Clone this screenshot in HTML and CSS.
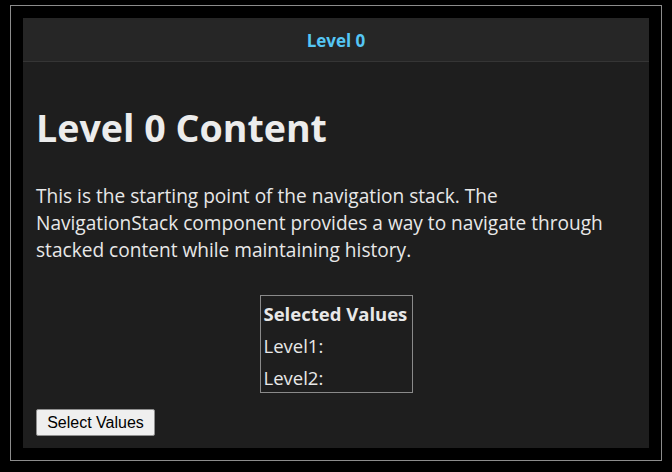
FILE: index.html
```html
<!DOCTYPE html>
<html lang="en">
<head>
<meta charset="utf-8">
<title>Navigation Stack</title>
<link rel="stylesheet" href="styles.css">
</head>
<body>
<div class="frame">
  <div class="nav-stack">
    <header class="nav-header">
      <span class="nav-title">Level 0</span>
    </header>
    <main class="nav-content">
      <h1 class="page-title">Level 0 Content</h1>
      <p class="intro">This is the starting point of the navigation stack. The NavigationStack component provides a way to navigate through stacked content while maintaining history.</p>
      <div class="values-box">
        <div class="values-row values-head">Selected Values</div>
        <div class="values-row">Level1:</div>
        <div class="values-row values-last">Level2:</div>
      </div>
      <div class="actions">
        <button class="select-btn" type="button">Select Values</button>
      </div>
    </main>
  </div>
</div>
</body>
</html>
```
FILE: styles.css
```css
html, body {
  margin: 0;
  padding: 0;
  background: #000;
}
body {
  padding: 5px 10px 0 10px;
  font-family: "Open Sans", "Noto Sans", sans-serif;
}
.frame {
  width: 652px;
  height: 456px;
  box-sizing: border-box;
  border: 1px solid #8c8c8c;
  padding: 12px;
}
.nav-stack {
  height: 430px;
  background: #1e1e1e;
  display: flex;
  flex-direction: column;
}
.nav-header {
  height: 43px;
  flex: none;
  background: #262626;
  border-bottom: 1px solid #353535;
  display: flex;
  align-items: center;
  justify-content: center;
}
.nav-title {
  color: #55c6f5;
  font-weight: 700;
  font-size: 17px;
  padding-top: 1px;
}
.nav-content {
  padding: 0 13px;
  color: #e8e8e8;
  display: flex;
  flex-direction: column;
}
.page-title {
  margin: 42px 0 0 0;
  font-size: 37.6px;
  line-height: 48px;
  font-weight: 700;
  color: #ececec;
}
.intro {
  margin: 31px 0 0 0;
  max-width: 592px;
  font-size: 19.1px;
  line-height: 27px;
}
.values-box {
  align-self: center;
  margin-top: 31px;
  width: 153px;
  box-sizing: border-box;
  border: 1px solid #8a8a8a;
  padding: 2px 3px 0 3px;
  font-size: 18.5px;
}
.values-row {
  height: 32px;
  line-height: 32px;
  white-space: nowrap;
}
.values-last {
  height: 30px;
}
.values-head {
  font-weight: 700;
}
.actions {
  margin-top: 16px;
}
.select-btn {
  width: 119px;
  height: 27px;
  padding: 0;
  font-family: "Liberation Sans", Arial, sans-serif;
  font-size: 16px;
  color: #000;
  background: #efefef;
  border: 1px solid #8f8f8f;
  border-radius: 2px;
}
```
